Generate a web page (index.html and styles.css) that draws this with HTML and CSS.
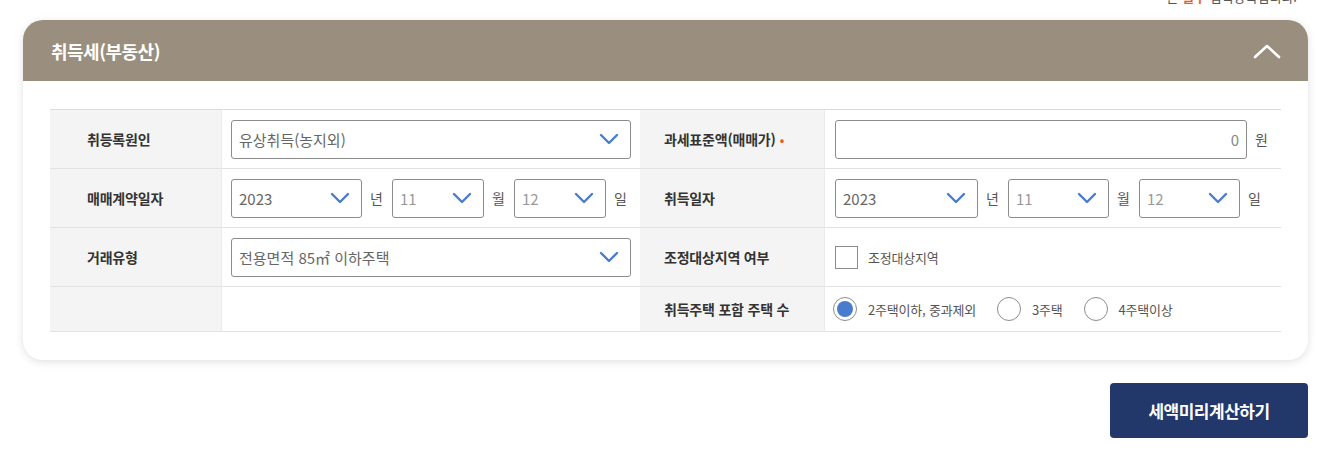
FILE: index.html
```html
<!DOCTYPE html>
<html lang="ko">
<head>
<meta charset="utf-8">
<title>취득세(부동산)</title>
<link rel="stylesheet" href="styles.css">
</head>
<body>
<div class="note"><span class="req">•</span> 는 <b class="req">필수</b> 입력항목입니다.</div>
<section class="card">
  <header class="card-head">
    <h2 class="card-title">취득세(부동산)</h2>
    <svg class="toggle" width="28" height="16" viewBox="0 0 28 16"><path d="M2 14 L14 3 L26 14" fill="none" stroke="#fff" stroke-width="2.6" stroke-linecap="round" stroke-linejoin="round"/></svg>
  </header>
  <div class="card-body">
    <div class="grid">
      <div class="lab lab-l">취등록원인</div>
      <div class="val val-l">
        <div class="sel w-full"><span>유상취득(농지외)</span><svg class="chev" viewBox="0 0 20 12"><path d="M2 2 L10 10 L18 2" fill="none" stroke="#4a7ccd" stroke-width="2.4" stroke-linecap="round" stroke-linejoin="round"/></svg></div>
      </div>
      <div class="lab lab-r">과세표준액(매매가) <span class="dot">•</span></div>
      <div class="val val-r">
        <div class="inp w-amount">0</div><span class="unit">원</span>
      </div>

      <div class="lab lab-l">매매계약일자</div>
      <div class="val val-l">
        <div class="sel w-y1"><span>2023</span><svg class="chev" viewBox="0 0 20 12"><path d="M2 2 L10 10 L18 2" fill="none" stroke="#4a7ccd" stroke-width="2.4" stroke-linecap="round" stroke-linejoin="round"/></svg></div><span class="unit">년</span>
        <div class="sel w-m1"><span class="light">11</span><svg class="chev" viewBox="0 0 20 12"><path d="M2 2 L10 10 L18 2" fill="none" stroke="#4a7ccd" stroke-width="2.4" stroke-linecap="round" stroke-linejoin="round"/></svg></div><span class="unit">월</span>
        <div class="sel w-m1"><span class="light">12</span><svg class="chev" viewBox="0 0 20 12"><path d="M2 2 L10 10 L18 2" fill="none" stroke="#4a7ccd" stroke-width="2.4" stroke-linecap="round" stroke-linejoin="round"/></svg></div><span class="unit">일</span>
      </div>
      <div class="lab lab-r">취득일자</div>
      <div class="val val-r">
        <div class="sel w-y2"><span>2023</span><svg class="chev" viewBox="0 0 20 12"><path d="M2 2 L10 10 L18 2" fill="none" stroke="#4a7ccd" stroke-width="2.4" stroke-linecap="round" stroke-linejoin="round"/></svg></div><span class="unit">년</span>
        <div class="sel w-m2"><span class="light">11</span><svg class="chev" viewBox="0 0 20 12"><path d="M2 2 L10 10 L18 2" fill="none" stroke="#4a7ccd" stroke-width="2.4" stroke-linecap="round" stroke-linejoin="round"/></svg></div><span class="unit">월</span>
        <div class="sel w-m2"><span class="light">12</span><svg class="chev" viewBox="0 0 20 12"><path d="M2 2 L10 10 L18 2" fill="none" stroke="#4a7ccd" stroke-width="2.4" stroke-linecap="round" stroke-linejoin="round"/></svg></div><span class="unit">일</span>
      </div>

      <div class="lab lab-l">거래유형</div>
      <div class="val val-l">
        <div class="sel w-full"><span>전용면적 85㎡ 이하주택</span><svg class="chev" viewBox="0 0 20 12"><path d="M2 2 L10 10 L18 2" fill="none" stroke="#4a7ccd" stroke-width="2.4" stroke-linecap="round" stroke-linejoin="round"/></svg></div>
      </div>
      <div class="lab lab-r">조정대상지역 여부</div>
      <div class="val val-r">
        <label class="check"><span class="box"></span><span class="opt">조정대상지역</span></label>
      </div>

      <div class="lab lab-l"></div>
      <div class="val val-l"></div>
      <div class="lab lab-r">취득주택 포함 주택 수</div>
      <div class="val val-r radios">
        <label class="radio"><span class="circle on"></span><span class="opt">2주택이하, 중과제외</span></label>
        <label class="radio"><span class="circle"></span><span class="opt">3주택</span></label>
        <label class="radio"><span class="circle"></span><span class="opt">4주택이상</span></label>
      </div>
    </div>
  </div>
</section>
<div class="actions">
  <button class="calc" type="button">세액미리계산하기</button>
</div>
</body>
</html>
```

FILE: styles.css
```css
* { box-sizing: border-box; }
html, body { margin: 0; padding: 0; background: #fff; }
body {
  font-family: "Noto Sans CJK KR", "Noto Sans", sans-serif;
  color: #333;
  width: 1318px;
  height: 458px;
  overflow: hidden;
}
.note {
  height: 28px;
  margin-top: -8px;
  padding-right: 21px;
  text-align: right;
  font-size: 13px;
  line-height: 10px;
  color: #555;
}
.note .req { color: #f05a1e; }
.card {
  margin-left: 23px;
  width: 1285px;
  background: #fff;
  border-radius: 20px;
  box-shadow: 0 2px 8px rgba(0, 0, 0, 0.12);
  overflow: hidden;
}
.card-head {
  height: 61px;
  background: #9a8f7e;
  display: flex;
  align-items: center;
  justify-content: space-between;
  padding: 0 27px 0 28px;
}
.card-title {
  margin: 0;
  color: #fff;
  font-size: 18px;
  font-weight: 700;
  letter-spacing: -0.5px;
}
.toggle { display: block; }
.card-body { padding: 28px 27px; }
.grid {
  display: grid;
  grid-template-columns: 172px 418px 185px 456px;
  grid-template-rows: 59px 59px 59px 45px;
  border-top: 1px solid #dcdcdc;
}
.grid > div { border-bottom: 1px solid #e2e2e2; }
.lab {
  background: #f4f4f4;
  display: flex;
  align-items: center;
  font-size: 14px;
  font-weight: 700;
  color: #333;
  letter-spacing: -0.2px;
}
.lab-l { padding-left: 37px; border-right: 1px solid #ebebeb; }
.lab-r { padding-left: 24px; border-right: 1px solid #ebebeb; }
.dot { color: #f05a1e; margin-left: 4px; font-size: 12px; }
.val {
  display: flex;
  align-items: center;
  background: #fff;
}
.val-l { padding-left: 9px; }
.val-r { padding-left: 10px; }
.sel, .inp {
  height: 39px;
  border: 1px solid #8c8c8c;
  border-radius: 3px;
  background: #fff;
  display: flex;
  align-items: center;
  font-size: 15px;
  color: #666;
}
.sel { justify-content: space-between; padding: 0 11px 0 7px; }
.sel .light { color: #999; }
.chev { width: 20px; height: 12px; display: block; }
.inp { justify-content: flex-end; padding-right: 7px; color: #888; }
.w-full { width: 400px; }
.w-y1 { width: 131px; }
.w-m1 { width: 92px; }
.w-y2 { width: 143px; }
.w-m2 { width: 101px; }
.w-amount { width: 412px; }
.unit {
  font-size: 14px;
  color: #555;
  padding: 0 8px;
  width: 30px;
  text-align: left;
}
.check, .radio {
  display: flex;
  align-items: center;
}
.box {
  width: 23px;
  height: 23px;
  border: 1px solid #8c8c8c;
  background: #fff;
  margin-right: 10px;
}
.opt {
  font-size: 13px;
  color: #555;
  letter-spacing: -0.2px;
}
.radios { padding-left: 8px; }
.radio { margin-right: 21px; }
.circle {
  width: 24px;
  height: 24px;
  border: 1px solid #8c8c8c;
  border-radius: 50%;
  background: #fff;
  margin-right: 11px;
  position: relative;
}
.circle.on::after {
  content: "";
  position: absolute;
  left: 3px;
  top: 3px;
  width: 16px;
  height: 16px;
  border-radius: 50%;
  background: #4a7ccd;
}
.actions {
  display: flex;
  justify-content: flex-end;
  padding-right: 10px;
  margin-top: 23px;
}
.calc {
  width: 198px;
  height: 55px;
  border: 0;
  border-radius: 4px;
  background: #22376a;
  color: #fff;
  font-family: "Noto Sans CJK KR", sans-serif;
  font-size: 17px;
  font-weight: 700;
  letter-spacing: -0.5px;
}
```
